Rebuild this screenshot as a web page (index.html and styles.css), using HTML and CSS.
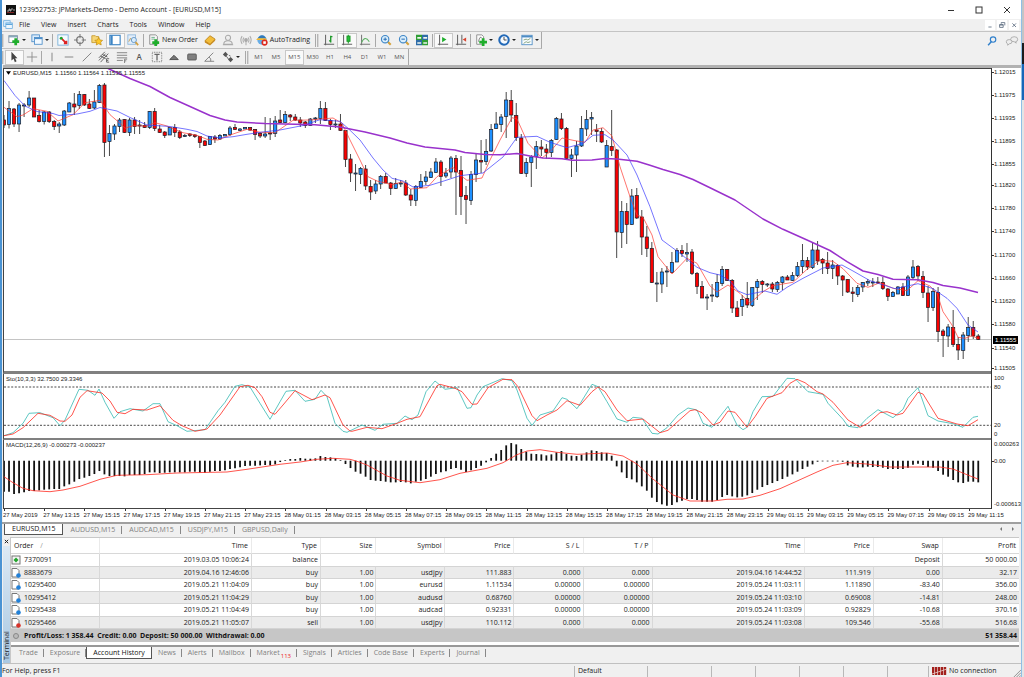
FILE: index.html
```html
<!DOCTYPE html>
<html lang="en">
<head>
<meta charset="utf-8">
<title>123952753: JPMarkets-Demo - Demo Account - [EURUSD,M15]</title>
<link rel="stylesheet" href="styles.css">
</head>
<body>
<div class="desktop">
<div class="window">
  <header class="titlebar">
    <svg class="app-logo" viewBox="0 0 10 10"><rect width="10" height="10" fill="#111"/><path d="M1 6h2V4h1v2h1V4h2M7 5h2" stroke="#ddd" stroke-width=".7" fill="none"/><path d="M1 7.500h7" stroke="#c33" stroke-width=".6"/></svg>
    <h1 class="title">123952753: JPMarkets-Demo - Demo Account - [EURUSD,M15]</h1>
    <div class="window-controls">
      <button aria-label="Minimize"><svg viewBox="0 0 8 8"><path d="M1 4.500h6"/></svg></button>
      <button aria-label="Maximize"><svg viewBox="0 0 8 8"><rect x="1" y="1" width="6" height="6"/></svg></button>
      <button aria-label="Close"><svg viewBox="0 0 8 8"><path d="M1 1l6 6M7 1l-6 6"/></svg></button>
    </div>
  </header>

  <nav class="menubar">
    <svg class="menu-logo" viewBox="0 0 14 14"><rect x="1" y="1" width="9" height="8" fill="#dcefff" stroke="#5ea6dc"/><rect x="4" y="4" width="9" height="8" fill="#eef8ff" stroke="#5ea6dc"/><path d="M4 6h9" stroke="#5ea6dc" stroke-width="2"/></svg>
    <button>File</button><button>View</button><button>Insert</button><button>Charts</button><button>Tools</button><button>Window</button><button>Help</button>
    <div class="child-controls">
      <button aria-label="Minimize chart"><svg viewBox="0 0 10 10"><path d="M3 7.500h4"/></svg></button>
      <button aria-label="Restore chart"><svg viewBox="0 0 10 10"><path d="M4 2h4.500v3.500M4 3.500V2M2 4.500h4.500V8H2zM2 5h4.500"/></svg></button>
      <button aria-label="Close chart"><svg viewBox="0 0 10 10"><path d="M3 3l4.500 4.500M7.500 3L3 7.500"/></svg></button>
    </div>
  </nav>

  <div class="toolbar toolbar-main">
    <div class="strip">
      <i class="grip"></i>
      <div class="group drops two">
        <button aria-label="New chart" class="drop"><svg viewBox="0 0 14 14"><rect x="1" y="2" width="10" height="8" fill="#fff" stroke="#7a8a9a"/><path d="M1 3h10" stroke="#8ab" stroke-width="2"/><path d="M9 5v8M5 9h8" stroke="#1fae2c" stroke-width="3.200"/></svg></button>
        <button aria-label="Profiles" class="drop"><svg viewBox="0 0 14 14"><rect x="1" y="1" width="9" height="8" fill="#dcecfb" stroke="#4e8fca"/><rect x="4" y="4" width="9" height="8" fill="#f2f9ff" stroke="#4e8fca"/><path d="M4 5h9" stroke="#4e8fca" stroke-width="2"/></svg></button>
      </div>
      <i class="sep"></i>
      <div class="group five">
        <button aria-label="Market Watch"><svg viewBox="0 0 14 14"><rect x="1" y="1" width="12" height="12" fill="#f6fbff" stroke="#74add8"/><circle cx="5" cy="5" r="1.800" fill="#1fa32c"/><path d="M6 6l5 5M8 11h3V8" stroke="#d22" stroke-width="2" fill="none"/></svg></button>
        <button aria-label="Data Window"><svg viewBox="0 0 14 14" fill="none" stroke="#777" stroke-width="1.200"><circle cx="7" cy="7" r="4"/><path d="M7 0v5M7 9v5M0 7h5M9 7h5"/></svg></button>
        <button aria-label="Navigator"><svg viewBox="0 0 14 14"><path d="M1 2h4l1 1h3v7H1z" fill="#f6d678" stroke="#c79a2e"/><path d="M9 4l1.500 3 3 .4-2.200 2.200.6 3.200L9 11.300l-2.900 1.500.6-3.200L4.500 7.400l3-.4z" fill="#ffc928" stroke="#bd8a14" stroke-width=".8"/></svg></button>
        <button aria-label="Terminal" class="on"><svg viewBox="0 0 14 14"><rect x="1" y="1.500" width="12" height="11" fill="#fff" stroke="#3c84c4" stroke-width="1.300"/><path d="M3 1.500v11" stroke="#3c84c4" stroke-width="2.600"/></svg></button>
        <button aria-label="Strategy Tester"><svg viewBox="0 0 14 14"><rect x="1" y="1" width="9" height="11" fill="#e3eefa" stroke="#8db6dd"/><path d="M2 9l2-4 2 3 2-4" stroke="#c99b4a" fill="none"/><circle cx="8" cy="7" r="3" fill="#d7ebfb" stroke="#5f93c6"/><path d="M10 9.500l3 3.500" stroke="#d3a040" stroke-width="2"/></svg></button>
      </div>
      <i class="sep"></i>
      <button class="wide order"><svg viewBox="0 0 14 14"><path d="M2 1h7l2 2v9H2z" fill="#f5f5f5" stroke="#888"/><path d="M4 4h4M4 6h4" stroke="#6a8"/><path d="M9 6v8M5 10h8" stroke="#1fae2c" stroke-width="3.200"/></svg>New Order</button>
      <div class="group three">
        <button aria-label="MetaEditor"><svg viewBox="0 0 14 14"><path d="M1 8l6-6 6 4-6 6z" fill="#f3bd3a" stroke="#bb8319"/><path d="M1 8v2l6 3.500V12zM7 13.500L13 8V6l-6 6z" fill="#c98a1c"/></svg></button>
        <button aria-label="MQL5 community"><svg viewBox="0 0 14 14" fill="#eee" stroke="#aaa" stroke-width="1.200"><circle cx="7" cy="4.500" r="3"/><path d="M2 12q0-4 5-4t5 4zM1 12.500h12"/></svg></button>
        <button aria-label="Signals"><svg viewBox="0 0 14 14" fill="none" stroke="#aaa" stroke-width="1.200"><circle cx="7" cy="7" r="1.600" fill="#aaa"/><path d="M4.500 4q-2 3 0 6M9.500 4q2 3 0 6M2.500 2.500q-3 4.500 0 9M11.500 2.500q3 4.500 0 9M7 8v5"/></svg></button>
      </div>
      <button class="wide auto"><svg viewBox="0 0 14 14"><circle cx="7" cy="7" r="5.500" fill="#66ade6"/><path d="M2 5q5-7 10 0z" fill="#3278b8"/><path d="M0 7h13l-2-2H2z" fill="#f2b830"/><circle cx="10" cy="10" r="3.600" fill="#dd2a1f"/><rect x="8.500" y="8.500" width="3" height="3" fill="#fff"/></svg>AutoTrading</button>
      <i class="sep"></i><i class="grip"></i>
      <div class="group three">
        <button aria-label="Bar chart"><svg viewBox="0 0 14 14" fill="none" stroke="#666" stroke-width="1.200"><path d="M3 1v12M1 12h12"/><path d="M9 2v8M7 8h2M9 3h2" stroke="#1e9a2a" stroke-width="1.600"/></svg></button>
        <button aria-label="Candlesticks" class="on"><svg viewBox="0 0 14 14" fill="none" stroke="#666" stroke-width="1.200"><path d="M3 1v12M1 12h12"/><path d="M8.500 1v10" stroke="#1e9a2a"/><rect x="7" y="2.500" width="3.500" height="6" fill="#25c23a" stroke="#1e9a2a"/></svg></button>
        <button aria-label="Line chart"><svg viewBox="0 0 14 14" fill="none" stroke="#777" stroke-width="1.200"><path d="M3 1v12M1 12h12"/><path d="M3 10q4-9 9-1" stroke="#5bb263"/></svg></button>
      </div>
      <i class="sep"></i>
      <div class="group three">
        <button aria-label="Zoom in"><svg viewBox="0 0 14 14"><path d="M8.500 8.500l4 4" stroke="#d5a23a" stroke-width="2.400"/><circle cx="6" cy="6" r="4.300" fill="#d9eefc" stroke="#3f86c6" stroke-width="1.300"/><path d="M6 4v4M4 6h4" stroke="#2a6fb4" stroke-width="1.200"/></svg></button>
        <button aria-label="Zoom out"><svg viewBox="0 0 14 14"><path d="M8.500 8.500l4 4" stroke="#d5a23a" stroke-width="2.400"/><circle cx="6" cy="6" r="4.300" fill="#d9eefc" stroke="#3f86c6" stroke-width="1.300"/><path d="M4 6h4" stroke="#2a6fb4" stroke-width="1.200"/></svg></button>
        <button aria-label="Tile windows"><svg viewBox="0 0 14 14"><path d="M0 1h7v6H0zM7 7h7v6H7z" fill="#2f9e35"/><path d="M7 1h7v6H7zM0 7h7v6H0z" fill="#2e6ca8"/><path d="M1.500 3.500H6v2H1.500zM8.500 3.500H13v2H8.500zM1.500 9.500H6v2H1.500zM8.500 9.500H13v2H8.500z" fill="#eef6ee"/></svg></button>
      </div>
      <i class="sep"></i>
      <div class="group pair">
        <button aria-label="Auto scroll" class="on"><svg viewBox="0 0 14 14" fill="none" stroke="#666" stroke-width="1.200"><path d="M3 1v12M1 12h12"/><path d="M6 3.500l5 3-5 3z" fill="#1eae2c" stroke="none"/></svg></button>
        <button aria-label="Chart shift"><svg viewBox="0 0 14 14" fill="none" stroke="#666" stroke-width="1.200"><path d="M3 1v12M1 12h12M8 1v10"/><path d="M13 4v5L9 6.500z" fill="#d8432e" stroke="none"/></svg></button>
      </div>
      <i class="sep"></i>
      <div class="group drops">
        <button aria-label="Indicators" class="drop"><svg viewBox="0 0 14 14"><path d="M2 1h6l2 2v9H2z" fill="#fafafa" stroke="#888"/><path d="M4 9q2-8 4-4" fill="none" stroke="#777"/><path d="M9.500 5v9M5 9.500h9" stroke="#1fae2c" stroke-width="3.200"/></svg></button>
        <button aria-label="Periods" class="drop"><svg viewBox="0 0 14 14"><circle cx="7" cy="7" r="5.500" fill="#f5faff" stroke="#2269b8" stroke-width="2.400"/><path d="M7 3.500V7h3" fill="none" stroke="#444" stroke-width="1.100"/></svg></button>
        <button aria-label="Templates" class="drop"><svg viewBox="0 0 14 14"><rect x="1" y="1.500" width="12" height="11" fill="#f8fcff" stroke="#4d8cc4"/><path d="M1 3h12" stroke="#4d8cc4" stroke-width="2"/><path d="M3 7l3-1 2 1 3-2M3 11l3-2 2 1 3-1" fill="none" stroke="#7a9a70"/></svg></button>
      </div>
    </div>
    <div class="corner">
      <button aria-label="Search"><svg viewBox="0 0 14 14" fill="none"><circle cx="8.500" cy="5" r="3.800" stroke="#2f7fcb" stroke-width="1.600"/><path d="M6 8l-4.500 5" stroke="#2f7fcb" stroke-width="2"/></svg></button>
      <button aria-label="Messages"><svg viewBox="0 0 18 14" fill="#eee" stroke="#999"><path d="M7 5q0-4 5-4t5 3.500-3 3.500l1 2-3-2q-5 0-5-3z"/><path d="M1 8q0-3 4-3t4 3-4 3l-2 2v-2q-2-.5-2-3z"/></svg></button>
    </div>
  </div>

  <div class="toolbar">
    <div class="strip">
      <i class="grip"></i>
      <div class="group pair">
        <button aria-label="Cursor" class="on"><svg viewBox="0 0 14 14"><path d="M4 1v10l2.500-2L8 13l2-1-1.700-3.500H11z" fill="#444"/></svg></button>
        <button aria-label="Crosshair"><svg viewBox="0 0 14 14" stroke="#888"><path d="M7 1v12M1 7h12"/></svg></button>
      </div>
      <i class="sep"></i>
      <div class="group lines">
        <button aria-label="Vertical line"><svg viewBox="0 0 14 14" stroke="#777"><path d="M7 2v10"/></svg></button>
        <button aria-label="Horizontal line"><svg viewBox="0 0 14 14" stroke="#777"><path d="M2 7h10"/></svg></button>
        <button aria-label="Trendline"><svg viewBox="0 0 14 14" stroke="#777"><path d="M2 12L12 2"/></svg></button>
        <button aria-label="Equidistant channel"><svg viewBox="0 0 14 14" stroke="#555" fill="none"><path d="M1 11l8-8M3 13l9-10M1 8l7-7M3 6l6 3M5 4l6 3"/><path d="M13 9h-3v4h3M10 11h2"/></svg></button>
        <button aria-label="Fibonacci retracement"><svg viewBox="0 0 14 14" stroke="#777" fill="none"><path d="M1 2h12M1 5h12M1 8h12M1 11h7"/><path d="M13 9.500h-3V14M10 11.500h2"/></svg></button>
        <button class="letter">A</button>
        <button aria-label="Text label"><svg viewBox="0 0 14 14" stroke="#666" fill="none"><rect x="1.500" y="1.500" width="11" height="11" stroke-dasharray="1 1"/><path d="M4 4h6M7 4v7" stroke-width="1.500"/></svg></button>
        <button aria-label="Triangle"><svg viewBox="0 0 14 14"><path d="M2 10l5-5 5 5z" fill="#777" stroke="#444"/></svg></button>
        <button aria-label="Rectangle"><svg viewBox="0 0 14 14"><rect x="2" y="3.500" width="10" height="7" rx="1" fill="#808080" stroke="#555"/></svg></button>
        <button aria-label="Angle"><svg viewBox="0 0 14 14" stroke="#777" fill="none"><path d="M12 2L2 12h11M7 7q3 2 2 5"/></svg></button>
      </div>
      <button aria-label="Arrows" class="drop arrows"><svg viewBox="0 0 14 14" fill="#555"><path d="M4 1l3 3-3 3-3-3zM10 7l3 3-3 3-3-3z"/><path d="M5 6l3 4M8 5l2 1" stroke="#555" fill="none"/></svg></button>
      <i class="sep"></i><i class="grip"></i>
      <div class="group periods">
        <button>M1</button><button>M5</button><button class="on">M15</button><button>M30</button><button>H1</button><button>H4</button><button>D1</button><button>W1</button><button>MN</button>
      </div>
    </div>
  </div>

  <main class="charts">
    <div class="plot"><svg id="price" viewBox="4 69 987 302" preserveAspectRatio="none"></svg>
      <p class="caption"><svg viewBox="0 0 6 4"><path d="M0 0h6L3 4z"/></svg>EURUSD,M15&nbsp; 1.11560 1.11564 1.11535 1.11555</p></div>
    <div class="axis" id="price-axis"></div>
    <div class="plot"><svg id="stochastic" viewBox="4 374 987 64" preserveAspectRatio="none"></svg>
      <p class="caption">Sto(10,3,3) 32.7500 29.3346</p></div>
    <div class="axis" id="stochastic-axis"></div>
    <div class="plot last"><svg id="macd" viewBox="4 440 987 68" preserveAspectRatio="none"></svg>
      <p class="caption">MACD(12,26,9) -0.000273 -0.000237</p></div>
    <div class="axis" id="macd-axis"></div>
    <div class="times" id="times"></div>
  </main>

  <div class="chart-tabs">
    <div class="tabs"><button class="on">EURUSD,M15</button><button>AUDUSD,M15</button><button>AUDCAD,M15</button><button>USDJPY,M15</button><button>GBPUSD,Daily</button></div>
    <div class="scrollers"><button aria-label="Previous tab"><svg viewBox="0 0 4 6"><path d="M3 1v4L1 3z"/></svg></button><button aria-label="Next tab"><svg viewBox="0 0 4 6"><path d="M1 1v4l2-2z"/></svg></button></div>
  </div>

  <section class="terminal">
    <aside class="side">
      <button aria-label="Close terminal"><svg viewBox="0 0 6 6"><path d="M1 1l4 4M5 1L1 5" stroke="#222" stroke-width="1.200"/></svg></button>
      <span class="side-name">Terminal</span>
    </aside>
    <div class="panel">
      <table class="orders">
        <colgroup><col class="c-order"><col class="c-time"><col class="c-mid"><col class="c-size"><col class="c-mid"><col class="c-mid"><col class="c-mid"><col class="c-mid"><col class="c-time"><col class="c-mid"><col class="c-mid"><col></colgroup>
        <thead><tr><th>Order <span class="sort">/</span></th><th>Time</th><th>Type</th><th>Size</th><th>Symbol</th><th>Price</th><th>S / L</th><th>T / P</th><th>Time</th><th>Price</th><th>Swap</th><th>Profit</th></tr></thead>
        <tbody id="orders"></tbody>
        <tfoot><tr><td colspan="11"><svg viewBox="0 0 10 10"><circle cx="5" cy="5" r="2.500" fill="#bbb" stroke="#888"/></svg>Profit/Loss: 1 358.44&nbsp; Credit: 0.00&nbsp; Deposit: 50 000.00&nbsp; Withdrawal: 0.00</td><td>51 358.44</td></tr></tfoot>
      </table>
      <div class="tabs panel-tabs"><button>Trade</button><button>Exposure</button><button class="on">Account History</button><button>News</button><button>Alerts</button><button>Mailbox</button><button>Market<sub>113</sub></button><button>Signals</button><button>Articles</button><button>Code Base</button><button>Experts</button><button>Journal</button></div>
    </div>
  </section>

  <footer class="status">
    <span class="help">For Help, press F1</span><span class="s-profile">Default</span><span class="s-a"></span><span class="s-b"></span><span class="s-b"></span><span class="s-b"></span><span class="s-b"></span><span class="s-c"></span>
    <span class="connection"><svg viewBox="0 0 15 9"><path d="M1 0v8M4 0v8M7 0v8M10 0v8M13 0v8" stroke="#a3201c" stroke-width="2.400"/><path d="M0 7L15 2" stroke="#eccfcd" stroke-width=".8"/></svg>No connection</span>
    <svg class="resize" viewBox="0 0 10 10"><path d="M1 10l9-9M4 10l6-6M7 10l3-3" stroke="#888"/></svg>
  </footer>
</div>
<div class="behind"><i class="b1"></i><i class="b2"></i><i class="b3"></i><i class="b4"></i></div>
</div>
<script src="chart.js"></script>
</body>
</html>
```

FILE: styles.css
```css
* { box-sizing: border-box; }
body { margin: 0; background: #fff; color: #222; font: 7px/10px "Open Sans", "Noto Sans", sans-serif; }
button { margin: 0; padding: 0; border: 0; background: none; color: inherit; font: inherit; white-space: nowrap; display: flex; align-items: center; justify-content: center; }
svg { display: block; flex: none; }
h1, p { margin: 0; font-size: inherit; font-weight: normal; }

.desktop { display: flex; min-height: 100vh; }
.window { flex: 1; min-width: 0; display: flex; flex-direction: column; border-left: 2px solid #4a93d3; border-right: 1px solid #8fbfe6; border-bottom: 2px solid #65a9e0; background: #f0f0f0; }
.behind { width: 2px; display: flex; flex-direction: column; background: #d8d8d8; }
.b1 { height: 43px; background: #c4c4c4; }
.b2 { height: 21px; background: #1c1c1c; }
.b3 { height: 36px; background: #1766b8; }
.b4 { flex: 1; background: #e4e4e4; }

.titlebar { height: 19px; padding-left: 4px; display: flex; align-items: center; background: #fff; }
.app-logo { width: 10px; height: 10px; }
.title { flex: 1; margin-left: 3px; }
.window-controls { display: flex; }
.window-controls button { width: 28px; height: 18px; }
.window-controls svg { width: 8px; height: 8px; fill: none; stroke: #333; }

.menubar { height: 12px; display: flex; align-items: center; padding-left: 1px; }
.menu-logo { width: 10px; height: 10px; margin-right: 1px; }
.menubar > button { padding: 0 6px 0 5px; }
.child-controls { margin-left: auto; display: flex; gap: 2px; padding-right: 2px; }
.child-controls button { width: 10px; height: 10px; background: #fff; }
.child-controls svg { width: 8px; height: 8px; fill: none; stroke: #54657a; }

.toolbar { height: 16px; display: flex; justify-content: space-between; }
.toolbar-main { height: 18px; border-top: 1px solid #c4c4c4; }
.strip { display: flex; align-items: center; border-right: 1px solid #a8a8a8; }
.toolbar-main .strip { border-bottom: 1px solid #c0c0c0; }
.grip { width: 2px; height: 13px; margin-right: 1px; border-left: 1px solid #b5b5b5; border-right: 1px solid #d8d8d8; }
.sep { width: 1px; height: 13px; margin: 0 1px; background: #a8a8a8; }
.group { display: flex; align-items: center; height: 100%; }
.group button { flex: 1; height: 15px; min-width: 0; }
.toolbar svg { width: 12px; height: 12px; }
.three { width: 54px; }
.pair { width: 35px; }
.five { width: 88px; }
.drops { width: 69px; }
.two { width: 46px; }
.lines { width: 175px; }
.periods { width: 158px; font-size: 6px; color: #555; }
.on { background: #fafafa; border: 1px solid #c8c8c8; }
.drop { gap: 2px; }
.drop::after { content: ""; border: 2px solid transparent; border-top: 2px solid #222; border-bottom: 0; }
.arrows { width: 26px; }
.letter { color: #555; font-size: 8px; font-weight: 600; }
.wide { gap: 2px; padding: 0 1px; height: 15px; }
.order { margin: 0 2px; }
.auto { margin-right: 3px; }
.corner { display: flex; gap: 8px; padding-right: 2px; align-items: center; }
.corner svg { width: 10px; height: 10px; }
.corner button:last-child svg { width: 14px; }

.charts { flex: 1; min-height: 0; display: grid; grid-template-columns: minmax(0, 1fr) 30px; grid-template-rows: minmax(0, 306fr) minmax(0, 66fr) minmax(0, 69fr) 13px; margin-left: 1px; border-top: 3px solid #b2b2b2; background: #fff; font: 6px/8px "Liberation Sans", Arial, sans-serif; color: #222; }
.plot { position: relative; min-height: 0; border-left: 1px solid #444; border-bottom: 2px solid #808080; }
.plot:first-child { border-top: 1px solid #444; border-bottom-width: 3px; }
.plot.last { border-bottom: 1px solid #444; }
.plot > svg { width: 100%; height: 100%; }
.caption { position: absolute; left: 2px; top: 1px; display: flex; align-items: center; }
.plot:first-child .caption { top: 0; }
.caption svg { width: 5px; height: 4px; margin-right: 2px; }
.axis { position: relative; border-left: 1px solid #333; }
.axis span { position: absolute; left: 2px; margin-top: -4px; white-space: nowrap; }
.axis span::before { content: ""; position: absolute; left: -2px; top: 4px; width: 2px; height: 1px; background: #333; }
.axis .bare::before { display: none; }
.axis .now { left: 1px; padding: 0 2px; background: #000; color: #fff; }
.times { grid-column: 1 / -1; display: flex; overflow: hidden; }
.times span { flex: 0 0 3.95%; white-space: nowrap; padding-top: 2px; }
.times span::before { content: ""; display: block; width: 1px; height: 2px; margin: -2px 0 0 1px; background: #333; }

.tabs { display: flex; color: #808080; }
.tabs button { padding: 0 7px; position: relative; height: 11px; }
.tabs button:not(.on)::after { content: ""; position: absolute; right: 0; top: 2px; height: 8px; border-right: 1px solid #888; }
.tabs .on { color: #111; background: #fff; border: 1px solid #555; border-top: 0; }
.chart-tabs { height: 15px; display: flex; justify-content: space-between; border-top: 2px solid #a0a0a0; padding: 0 2px; }
.scrollers { display: flex; gap: 8px; padding: 0 4px; align-items: flex-start; }
.scrollers svg { width: 4px; height: 6px; margin-top: 2px; fill: #777; }

.terminal { display: flex; margin-right: 2px; }
.side { width: 8px; display: flex; flex-direction: column; align-items: center; }
.side button { height: 9px; }
.side button svg { width: 5px; height: 5px; }
.side-name { flex: 1; width: 7px; writing-mode: vertical-rl; transform: rotate(180deg); line-height: 7px; text-align: left; background: linear-gradient(#a9c8e2, #dce9f4); padding-top: 3px; }
.panel { flex: 1; min-width: 0; border-left: 1px solid #c8c8c8; border-top: 1px solid #c8c8c8; background: #fff; }
.orders { width: 100%; table-layout: fixed; border-collapse: separate; border-spacing: 0; }
.c-order { width: 8.8%; }
.c-time { width: 15.1%; }
.c-mid { width: 6.85%; }
.c-size { width: 5.5%; }
.orders th, .orders td { padding: 0 2px; text-align: right; font-weight: normal; white-space: nowrap; border-right: 1px solid #d8d8d8; overflow: hidden; }
.orders th { height: 16px; padding: 0 3px; border-bottom: 1px solid #d8d8d8; border-right-color: #eaeaea; }
.orders tr > :first-child { text-align: left; }
.orders td:first-child { padding-left: 0; }
.orders tr > :last-child { border-right: 0; }
.sort { color: #999; margin-left: 5px; }
.orders tbody td { height: 12px; }
.orders tbody tr:nth-child(even) td { height: 13px; background: #ebebeb; border-bottom: 1px solid #d4d4d4; border-top: 1px solid #d4d4d4; }
.orders td svg { display: inline-block; width: 10px; height: 10px; margin-right: 3px; vertical-align: top; }
.orders td.blank { border-right-color: transparent; }
.orders tfoot td { height: 13px; background: #c6c6c6; border: 0; font-weight: 700; color: #111; }
.panel-tabs { height: 18px; margin-top: 3px; padding-left: 2px; border-top: 2px solid #989898; background: #f0f0f0; }
.panel-tabs button { padding: 0 6px; height: 12px; }
.panel-tabs sub { color: #e22; font-size: 6px; line-height: 6px; margin: 5px 0 0 1px; }

.status { height: 15px; display: flex; align-items: center; border-top: 1px solid #c0c0c0; }
.status span { height: 11px; padding-left: 3px; border-left: 1px solid #b8b8b8; }
.status .help { flex: 1; padding: 0; border: 0; }
.status .s-profile { width: 73px; }
.s-a { width: 64px; }
.s-b { width: 44px; }
.s-c { width: 41px; }
.connection { width: 84px; display: flex; align-items: center; gap: 2px; }
.connection svg { width: 15px; height: 9px; }
.resize { width: 9px; height: 9px; align-self: flex-end; }
```

FILE: chart.js
```js
const NS = "http://www.w3.org/2000/svg";
const STEP = 5.022, START = 4;
const xAt = i => START + i * STEP;

function add(svg, name, attrs) {
  const el = document.createElementNS(NS, name);
  for (const key in attrs) el.setAttribute(key, attrs[key]);
  svg.appendChild(el);
}
function line(svg, points, color, width) {
  add(svg, "polyline", { points, fill: "none", stroke: color, "stroke-width": width, "stroke-linejoin": "round" });
}

/* high, body top, body bottom, low, direction */
const candles = `115 120 125 128 R|101 108.5 124.5 128.5 B|108 109 124 127 R|103 105 124 132 B|103 105 106 117 B|91 98 105 107 B|98 98 117 117 R|110 115.5 121.5 122.5 R|111 112 121.5 124.5 B|111 112 121.5 123 R|120 121.5 126.5 130 R|122 124 126 133 B|110 111 125 126 B|102 103 112 112 B|93 104 107 115 R|91 94.5 105.5 109 B|94 94.5 105 106 R|99 104 108.5 109 R|90 102 108 109 B|84 85.5 102.5 103 B|83 85 142.5 157 R|125 133.5 141.5 156 B|124 126 134 140 B|118 120 126.5 132 B|119 119.5 132.5 133 R|118 120 132.5 136 B|117 120 126.5 134 R|120 125 126 134 B|122 125.5 127.5 128 R|111 111.5 127.5 129 B|108 111.5 128.5 131 R|125 129 132.5 133 R|131 132 135.5 138 R|127 127.5 135 135 B|124 127.5 132.5 137 R|130 132 137.5 139 R|134 135.5 136.5 137 B|133 134 135.5 137 R|134 135 136.5 138 R|136 136.5 142.5 148 R|140 141 145.5 146 R|136 136.5 144.5 145 B|135 137 139 143 R|134 135.5 139 140 B|134 134.5 136 136 B|126 128 134.5 136 B|124 127.5 129.5 130 R|128 129 130.5 131 B|127 127.5 129 129 B|127 127.5 130 131 R|129 129.5 134.5 140 R|132 133.5 136 138 R|117 134 136 138 B|118 133 134 140 R|116 121 133.5 137 B|110 120 122.5 123 R|111 114.5 122.5 123 B|114 115 117 121 R|114 117 120 121 R|117 120 123 127 R|121 122 125.5 128 R|118 119 125.5 126 B|117 118 119 123 B|101 108.5 118.5 124 B|102 108.5 120.5 121 R|119 120.5 124.5 130 R|120 124 125 128 B|114 124 130.5 131 R|130 130.5 159.5 167 R|154 159 173 182 R|164 173 174 191 B|167 168.5 174.5 184 B|165 169 186 190 R|180 186.5 192 200 R|180 184 191 194 B|175 176.5 184 189 B|173 176.5 183 183 R|182 183 188.5 195 R|178 183.5 188.5 189 B|180 183 184 187 B|180 183 195 196 R|189 195 200 206 R|185 186.5 200.5 206 B|174 181.5 187.5 188 B|171 177 181.5 185 B|168 172 177.5 178 B|158 162 172.5 173 B|160 162 176.5 186 R|168 173 176 178 B|156 158 172 178 B|155 158.5 172 215 R|156 170.5 196.5 215 R|186 195.5 199.5 224 R|171 174.5 200.5 205 B|154 160 174.5 182 B|140 160.5 162 173 R|139 151.5 161.5 165 B|124 129.5 151 152 B|112 124 128.5 129 B|114 117 124.5 132 B|92 100 116.5 138 B|90 100.5 115 122 R|103 115.5 137.5 141 R|134 138 173.5 174 R|158 162.5 173.5 177 B|155 157 162.5 187 B|141 146.5 156.5 169 B|140 147 149 156 R|144 149 152.5 159 R|139 140.5 152.5 157 B|117 118.5 139.5 140 B|113 119 128.5 130 R|127 128.5 158.5 159 R|149 155 158.5 177 B|141 146 155 172 B|116 128.5 146 147 B|110 119.5 129 136 B|112 117.5 119 135 B|124 130 131.5 142 R|128 131.5 142 143 R|140 145.5 167 167 B|110 146.5 150.5 156 R|149 150 232 258 R|201 211.5 232.5 248 B|203 211.5 224.5 244 R|189 196 224.5 225 B|188 195.5 218 219 R|210 217 237 255 R|226 237 248.5 257 R|242 248.5 282.5 283 R|272 283 284 302 B|268 272 284 293 B|266 271 272 287 B|252 262.5 272.5 273 B|248 250.5 262 262 B|245 250.5 253.5 257 R|243 252.5 254 262 B|249 252 273.5 275 R|272 273.5 286.5 294 R|281 286.5 298 298 R|294 297 298 310 B|284 295 296 302 B|274 282.5 296.5 298 B|266 269.5 283.5 286 B|269 269.5 280.5 281 R|279 280.5 308 313 R|301 308 316.5 317 R|295 299.5 306.5 316 B|282 298.5 305 308 R|287 287.5 305.5 307 B|279 281.5 287.5 300 B|280 281.5 284.5 293 R|283 284 285 287 B|282 284 289 292 R|281 282.5 289.5 292 B|276 277 282.5 290 B|275 277 280 280 R|272 275.5 280.5 281 B|262 266.5 275.5 277 B|244 260.5 266.5 273 B|257 260.5 267 270 R|243 250 267.5 269 B|241 250 261 265 R|258 259.5 263 274 R|252 263 268.5 274 R|260 265 268.5 279 B|264 265.5 276 285 R|275 276 280 296 R|279 279.5 292 293 R|287 292 293.5 302 R|285 287.5 294.5 297 B|282 282.5 287 292 B|279 281.5 283 286 B|278 282 283 287 B|277 282 283 284 R|277 282.5 288.5 290 R|288 289 296.5 301 R|291 292.5 296.5 297 B|286 287 294 294 B|283 287 295.5 296 R|275 277 295.5 296 B|260 267 277.5 280 B|265 266.5 276 281 R|271 276.5 292.5 298 R|286 293 307.5 322 R|288 291.5 307.5 311 B|287 292.5 331.5 342 R|329 331 335.5 357 R|324 327 336 347 B|310 327.5 344.5 347 R|337 344.5 350 360 R|332 335 350.5 359 B|317 327.5 335.5 342 B|321 327.5 336 339 R|334 336 339.5 340 R`;

const slowMA = "108,68.5 130,78.5 150,86.5 170,97.5 190,106.5 210,115.5 225,120 237,122 265,123.6 315,124.8 340,127 365,132 390,138 407,143 425,147 455,150 465,152.5 485,154.6 500,154.8 517,153.5 530,156 543,158 562,158.7 572,160.3 592,160 605,158.5 617,159 637,161.3 650,165.3 663,169.5 680,174.5 693,179.5 710,187.7 735,200 763,219 783,229.3 807,240 830,250.5 847,261.7 863,271 878,274.5 893,279.3 918,279.8 933,282.5 943,285.5 960,288 978,292.5";
const midMA = "4,80.5 15,95.5 25,106 37,111.5 53,113.5 59,115.5 77,114 90,111.3 100,107.5 117,111 130,117.5 147,125 170,126.5 187,129.3 197,131.5 207,136 220,138 233,136.7 247,134.3 260,132.3 280,130 303,125.5 320,119.7 340,121.3 348,128.3 360,140 373,158 383,170 392,178.3 403,181 413,187 430,185.3 447,180 460,175.7 483,173 503,157 517,137.3 537,136.3 550,142.3 567,147.7 583,143.3 593,135.3 605,134.7 613,140 627,155 637,175 650,206.7 662,240 680,253.3 697,267.3 710,272.7 720,275 730,281 738,291 747,294.7 765,291 777,294.3 787,287.3 803,278.3 823,268 842,265 853,271 870,280.7 895,288.7 918,283.7 933,288.7 947,298.3 957,308.3 968,325 978,332";
const fastMA = "4,107.3 17,116.7 23,115 33,108.7 47,111.3 58,121 73,114.7 85,102.7 100,100.3 110,114.7 120,123.3 125,128.3 133,125.7 147,126 155,122.7 167,126 183,132.7 197,135.3 207,139.3 218,140 233,134 247,129.3 260,132.3 275,132.7 293,120.3 310,120 333,118 342,123.3 350,140 360,160 368,176.7 377,181 392,184.7 403,181.7 410,189 427,187.7 437,176.7 453,167.3 460,175 467,180.3 482,178 490,160 500,140 512,117.7 517,119 528,143.3 542,158 550,151.7 562,138 575,140.7 585,142.3 593,130 603,127.7 612,136 620,166.7 630,196.7 637,215 643,217.3 652,235 658,256.7 672,274 687,258.3 697,263.3 710,286 717,292 728,285 740,293.3 750,303.3 763,291.7 773,285.7 793,282.3 807,269.3 820,260.3 833,261.3 843,268.7 857,283.3 868,287.3 880,282.7 893,288.3 907,290.7 918,280.7 930,286 937,293.3 943,311.7 952,325 958,337.3 965,338.3 972,335.7 978,338.7";

const stoMain = "4,435.7 13,432.7 23,423.3 29,413.3 40,412.7 53,417.7 60,425.7 65,420 79,389.3 88,390.3 95,395.3 99,389 105,402.3 114,418.3 120,411.7 130,408.7 143,411 153,403.7 160,403.7 168,421.7 177,425.7 187,431.3 205,429.7 218,410.7 225,402.3 235,386.3 242,384.7 250,387 260,403.3 270,419.3 280,401.7 286,391.3 295,390.3 305,401.3 315,399.3 321,390.3 327,396.7 335,423.3 343,431.3 347,432.3 362,425 375,430.3 383,424.3 397,423.3 405,416 412,419.7 418,415 426,391.7 435,381 445,389.3 457,387.7 467,408.3 471,407.7 477,395 483,386.7 502,378.7 512,380.7 517,390 527,418.3 532,425.3 540,415 553,411 562,397.7 567,399.3 577,408.7 592,384.3 598,386.7 607,401.7 617,419 627,422.3 633,417.3 642,418.3 652,433.3 658,434 667,427.7 678,415 688,408 697,410 703,423.3 712,427.3 718,419 728,406.3 737,425 743,429.7 747,427.3 753,411.7 762,396.7 773,396.3 787,378.3 795,378.7 808,391.7 823,394.3 828,403.3 843,419.3 848,426.3 858,427.7 867,418.3 878,409.7 893,417.7 903,409.3 908,398.3 918,387.7 928,415.7 938,421 953,423.7 963,427.3 973,417.3 978,416.3";
const stoSignal = "4,435.7 13,434 23,427.7 38,413.3 50,415.3 60,421 65,421.3 72,415 80,397.3 87,390.7 102,393 110,401 117,412.3 125,413.7 133,409.3 147,410 160,405.7 173,420.3 182,425.7 195,431.3 207,429 220,415 240,386.7 248,385.3 255,387.7 262,396.7 270,412.3 275,414.3 283,405 295,390.7 312,399.7 325,395 330,397.7 343,425 350,431 352,431.3 367,427.3 382,428.7 397,423.3 407,419.3 420,416.7 437,385.7 440,384.3 455,388.3 462,391.7 472,404.3 477,404 488,387.7 503,379.3 512,379.7 518,386.7 532,415.7 537,420.7 547,415 557,410 567,400.7 580,405.3 592,391.7 598,387 605,391.7 617,410 627,420.7 643,419 660,432.7 668,430.3 690,410.7 695,409.7 702,412.7 713,425 720,422.3 728,411 735,412.3 747,427.3 755,416.7 767,398.3 782,392.7 790,383.3 797,379.3 805,382.7 817,391.7 823,394 833,402.3 848,420 860,427.3 868,423.3 880,412.7 887,411.7 897,415 903,413.3 918,392.3 923,394 938,418.3 957,424 968,425.7 978,419.7";

const HIST_ZERO = 287, HIST_UNIT = 3, HIST_BASE = 460.7;
const histogram = [380,380,387,385,382,378,378,376,374,373,372,372,364,358,350,342,338,333,327,318,328,333,333,333,334,330,330,330,327,322,322,324,323,322,322,322,322,320,320,322,323,320,318,318,316,312,310,307,303,302,302,301,300,301,298,291,285,282,282,279,281,281,280,273,276,277,280,285,297,309,320,326,335,345,347,348,350,352,352,351,352,355,350,347,342,335,327,322,319,312,309,314,321,316,309,302,292,279,266,255,241,234,238,252,260,266,267,268,271,268,262,258,267,272,273,269,262,256,258,262,264,272,304,322,339,343,352,364,377,398,411,418,422,420,412,407,402,402,405,410,410,410,405,396,390,394,397,395,391,384,374,366,360,354,348,342,335,328,320,312,305,298,290,289,289,289,289,290,301,305,307,307,305,306,306,308,312,312,312,312,308,299,296,300,306,308,318,329,335,345,352,354,350,350,352];
const macdSignal = "4,476.7 13,482.7 23,488.3 33,490.7 50,491.7 63,490 80,486.3 100,479.3 117,475.3 147,474.7 177,473 227,472 247,469.3 280,464.3 300,462 317,459.3 333,458.3 350,459.3 357,461.3 367,465 387,476 400,480.3 420,482.7 440,479.7 460,473.3 487,468.3 503,462.7 517,454.7 527,451 540,449.7 557,452.3 577,454.3 607,453 623,456 637,464 653,479 673,495 690,501 713,501 727,499.3 743,499 760,495.3 780,488.7 800,479.7 817,472 833,465.3 847,462.7 867,464 890,467 920,467 940,467 953,469 967,474.7 978,479";

const price = document.getElementById("price");
add(price, "path", { d: "M4 339.5H991", stroke: "#c4c4c4", "stroke-width": 1 });
candles.split("|").forEach((row, i) => {
  const [high, top, bottom, low, dir] = row.split(" ");
  const x = xAt(i);
  add(price, "path", { d: `M${x} ${high}V${low}`, stroke: "#333", "stroke-width": 0.9 });
  add(price, "rect", { x: x - 1.6, y: +top, width: 3.2, height: Math.max(bottom - top, 0.5), fill: dir === "R" ? "#fa0000" : "#1e90ff", stroke: "#1c1c24", "stroke-width": 0.7 });
});
line(price, fastMA, "#ff3a30", 0.7);
line(price, midMA, "#3a3aff", 0.7);
line(price, slowMA, "#9932cc", 1.5);

const sto = document.getElementById("stochastic");
[387, 425.3].forEach(y => add(sto, "path", { d: `M4 ${y}H991`, stroke: "#333", "stroke-width": 0.9, "stroke-dasharray": "2 1.6" }));
line(sto, stoMain, "#35b9b2", 0.8);
line(sto, stoSignal, "#ff2a20", 0.8);

const macd = document.getElementById("macd");
histogram.forEach((v, i) => {
  add(macd, "path", { d: `M${xAt(i)} ${HIST_BASE}V${HIST_BASE + (v - HIST_ZERO) / HIST_UNIT}`, stroke: "#111", "stroke-width": 1.8 });
});
line(macd, macdSignal, "#ff2a20", 0.8);

function axis(id, top, height, labels) {
  const box = document.getElementById(id);
  for (const [text, y, cls] of labels) {
    const el = document.createElement("span");
    el.textContent = text;
    if (cls) el.className = cls;
    el.style.top = ((y - top) / height * 100).toFixed(2) + "%";
    box.appendChild(el);
  }
}
axis("price-axis", 68, 306, [["1.12015", 72], ["1.11975", 95], ["1.11935", 118], ["1.11895", 141], ["1.11855", 164], ["1.11820", 185], ["1.11780", 208], ["1.11740", 231], ["1.11700", 255], ["1.11660", 278], ["1.11620", 301], ["1.11580", 324], ["1.11540", 348], ["1.11505", 368], ["1.11555", 340, "now bare"]]);
axis("stochastic-axis", 374, 66, [["100", 378, "bare"], ["80", 387, "bare"], ["20", 425, "bare"], ["0", 434, "bare"]]);
axis("macd-axis", 440, 69, [["0.000263", 444, "bare"], ["0.00", 461], ["-0.000613", 504, "bare"]]);

const times = document.getElementById("times");
for (let k = 0; k < 25; k++) {
  const hour = 11 + 2 * k;
  const el = document.createElement("span");
  const day = 27 + Math.floor(hour / 24);
  el.textContent = k === 0 ? "27 May 2019" : `${day} May ${String(hour % 24).padStart(2, "0")}:15`;
  times.appendChild(el);
}

const rows = [
  ["7370091", "2019.03.05 10:06:24", "balance", "", "", "", "", "", "", "", "Deposit", "50 000.00"],
  ["8883679", "2019.04.16 12:46:06", "buy", "1.00", "usdjpy", "111.883", "0.000", "0.000", "2019.04.16 14:44:52", "111.919", "0.00", "32.17"],
  ["10295400", "2019.05.21 11:04:09", "buy", "1.00", "eurusd", "1.11534", "0.00000", "0.00000", "2019.05.24 11:03:11", "1.11890", "-83.40", "356.00"],
  ["10295412", "2019.05.21 11:04:29", "buy", "1.00", "audusd", "0.68760", "0.00000", "0.00000", "2019.05.24 11:03:10", "0.69008", "-14.81", "248.00"],
  ["10295438", "2019.05.21 11:04:49", "buy", "1.00", "audcad", "0.92331", "0.00000", "0.00000", "2019.05.24 11:03:09", "0.92829", "-10.68", "370.16"],
  ["10295466", "2019.05.21 11:05:07", "sell", "1.00", "usdjpy", "110.112", "0.000", "0.000", "2019.05.24 11:03:08", "109.546", "-55.68", "516.68"]
];
const icon = type => type === "balance"
  ? '<svg viewBox="0 0 10 10"><rect x="1" y="1" width="8" height="8" fill="#f4f4f4" stroke="#777"/><path d="M5 2.500L7.500 5 5 7.500 2.500 5z" fill="#22a52c"/></svg>'
  : `<svg viewBox="0 0 10 10"><path d="M1 .5h5l2 2v6.500H1z" fill="#fff" stroke="#777"/><circle cx="7.500" cy="7.500" r="2.300" fill="${type === "sell" ? "#d8332a" : "#2180d8"}"/></svg>`;
document.getElementById("orders").innerHTML = rows.map(r =>
  "<tr>" + r.map((c, i) => `<td${c === "" ? ' class="blank"' : ""}>${i === 0 ? icon(r[2]) : ""}${c}</td>`).join("") + "</tr>").join("");
```
